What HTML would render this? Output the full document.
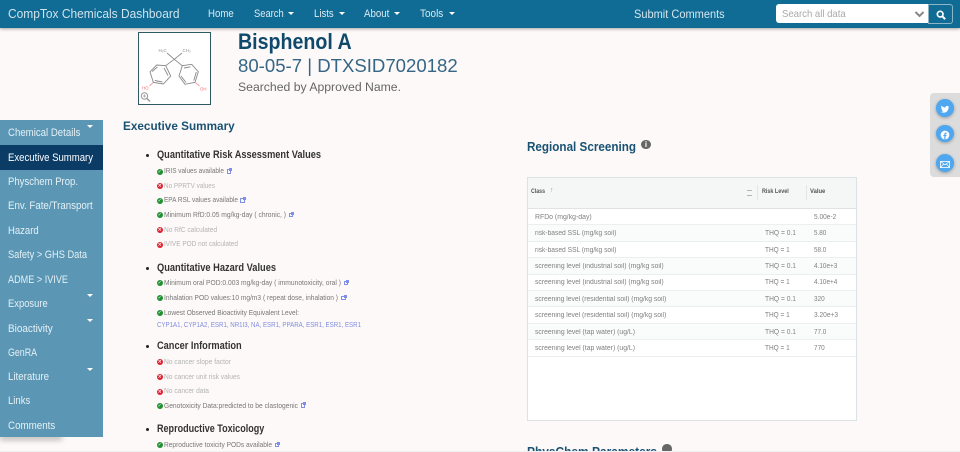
<!DOCTYPE html>
<html lang="en"><head><meta charset="utf-8"><title>Bisphenol A</title>
<style>
html,body{margin:0;padding:0;width:960px;height:452px;overflow:hidden;background:#fdf9f8;font-family:"Liberation Sans",sans-serif;}
#page{position:absolute;left:0;top:0;width:960px;height:452px;overflow:hidden;background:#fdf9f8;}
.a{position:absolute;white-space:nowrap;}
#nav{position:absolute;left:0;top:0;width:960px;height:28px;background:#106b95;box-shadow:0 1px 3px rgba(0,0,0,.35);color:#dcebf2;}
#nav .m{font-size:10.6px;line-height:16px;top:5.5px;}
.car{position:absolute;width:0;height:0;border-left:3px solid transparent;border-right:3px solid transparent;border-top:3px solid #fff;}
#sh{position:absolute;left:0;top:432px;width:62px;height:5px;box-shadow:0 3px 6px rgba(0,0,0,.28);}
#side{position:absolute;left:0;top:120px;width:103px;height:317px;background:#5b97b5;}
#side .i{position:absolute;left:7.7px;margin-top:.7px;font-size:11.2px;line-height:14px;color:#e4f0f5;white-space:nowrap;}
.h{font-size:10.8px;font-weight:bold;color:#333;line-height:13px;}
.t{font-size:7.4px;color:#777;line-height:10px;}
.g{color:#b3b3b3;}
.dot{position:absolute;width:3px;height:3px;border-radius:50%;background:#222;}
.ic{position:absolute;left:156.700px;width:6.200px;height:6.200px;border-radius:50%;color:#fff;font:bold 5px/6.200px "DejaVu Sans",sans-serif;text-align:center;}
.y{background:#1f9130;}.n{background:#e0202e;}
.y::after{content:"✓";}.n::after{content:"×";}
.ln{position:absolute;width:4.600px;height:4.600px;border:.8px solid #8090e6;box-sizing:border-box;}
.ln::after{content:"";position:absolute;left:1.500px;top:-2px;width:3px;height:3px;background:#8090e6;}
.tr{position:absolute;left:528px;width:328px;height:16.500px;border-bottom:1px solid #eceff1;font-size:7px;color:#808080;line-height:17px;box-sizing:border-box;}
.tr span{position:absolute;white-space:nowrap;}
.tr .c{left:7px}.tr .r{left:237.300px}.tr .v{left:286.300px}
.th{position:absolute;font-size:6.400px;line-height:10px;font-weight:bold;color:#555;white-space:nowrap;top:187px;}
.sb{position:absolute;left:936px;width:18px;height:17.500px;border-radius:50%;background:#4fa7ef;box-shadow:0 1px 3px rgba(0,0,0,.3);}
.hb{font-size:12.800px;line-height:17px;font-weight:bold;color:#1a5273;}
</style></head><body><div id="page">
<div id="nav">
<div class="a" w="171.500" style="left:8px;top:5px;font-size:12.800px;line-height:18px;color:#cfe3ec">CompTox Chemicals Dashboard</div>
<div class="a m" w="25.700" style="left:208.300px">Home</div>
<div class="a m" w="29.700" style="left:253.700px">Search</div><div class="car" style="left:288px;top:11.500px"></div>
<div class="a m" w="19.700" style="left:313.700px">Lists</div><div class="car" style="left:339px;top:11.500px"></div>
<div class="a m" w="25.300" style="left:364px">About</div><div class="car" style="left:394px;top:11.500px"></div>
<div class="a m" w="23.300" style="left:420px">Tools</div><div class="car" style="left:448.500px;top:11.500px"></div>
<div class="a" w="90.700" style="left:633.700px;top:5px;font-size:11.800px;line-height:18px;color:#d5e7ef">Submit Comments</div>
<div class="a" style="left:775.700px;top:4.300px;width:152.600px;height:19px;background:#fff;border-radius:3px 0 0 3px"></div>
<div class="a" w="63.700" style="left:782.300px;top:6.500px;font-size:10.400px;line-height:16px;color:#a8a8a8">Search all data</div>
<svg class="a" style="left:914px;top:10px" width="11" height="8" viewBox="0 0 11 8"><path d="M1.500 2l4 4 4-4" fill="none" stroke="#888" stroke-width="2"/></svg>
<div class="a" style="left:928px;top:4px;width:25px;height:19.500px;background:#106b95;border:1px solid #8db5c8;border-radius:0 3px 3px 0;box-sizing:border-box"></div>
<svg class="a" style="left:936px;top:9.500px" width="10" height="10" viewBox="0 0 12 12"><circle cx="5" cy="5" r="3.400" fill="none" stroke="#fff" stroke-width="2"/><path d="M7.500 7.500L11 11" stroke="#fff" stroke-width="2.400"/></svg>
</div>

<div class="a" style="left:138px;top:32px;width:73px;height:73px;border:1px solid #2f5a62;box-sizing:border-box;background:#fff"></div>
<svg class="a" style="left:138px;top:32px" width="73" height="73" viewBox="0 0 73 73">
<g fill="none" stroke="#8a8a8a" stroke-width=".9">
<path d="M36.300 27.300L29 21M36.300 27.300L44 21M36.300 27.300L27.700 33.700M36.300 27.300L44.300 33.700"/>
<path d="M27.700 33.700L32.700 44 25.300 52 15.300 50.300 12 39.700 18.700 33zM44.300 33.700L41 44 47 52.300 57 50.300 60.300 39.700 53.700 32.300z"/>
<path d="M26 36L30 43.500M16.800 48.500L24.500 50M14 39.500L19.500 35M46 36L52.500 34.800M58.300 40L55.800 48.500M48 50.500L43 44"/>
</g>
<path d="M15.300 50.300L11.500 54M57 50.300L61.500 54" stroke="#f29a9a" stroke-width=".9"/>
<text x="4" y="57.500" font-size="4.400" fill="#f07070" font-family="Liberation Sans">HO</text>
<text x="62" y="58.500" font-size="4.400" fill="#f07070" font-family="Liberation Sans">OH</text>
<text x="20.500" y="20" font-size="4.400" fill="#888" font-family="Liberation Sans">H₃C</text>
<text x="44.500" y="20" font-size="4.400" fill="#888" font-family="Liberation Sans">CH₃</text>
<circle cx="6.500" cy="64" r="3.200" fill="none" stroke="#999" stroke-width="1"/><path d="M9 66.500L12 69.500" stroke="#999" stroke-width="1.400"/><path d="M5 64h3M6.500 62.500v3" stroke="#999" stroke-width=".7"/>
</svg>

<div class="a" w="113.700" style="left:238px;top:29px;font-size:22px;line-height:26px;font-weight:bold;color:#0f4a6d">Bisphenol A</div>
<div class="a" w="219.700" style="left:237.700px;top:54px;font-size:18.400px;line-height:24px;color:#356685">80-05-7 | DTXSID7020182</div>
<div class="a" w="163" style="left:237.700px;top:79.300px;font-size:12.200px;line-height:16px;color:#666">Searched by Approved Name.</div>

<div id="sh"></div>
<div id="side">
<div class="a" style="left:0;top:25px;width:103px;height:24.500px;background:#0b3c66"></div>
<div class="i" w="72.300" style="top:5px">Chemical Details</div>
<div class="i" w="85" style="top:30px;color:#fff">Executive Summary</div>
<div class="i" w="70" style="top:54px">Physchem Prop.</div>
<div class="i" w="84.700" style="top:78.500px">Env. Fate/Transport</div>
<div class="i" w="30.700" style="top:103px">Hazard</div>
<div class="i" w="79" style="top:127.500px">Safety &gt; GHS Data</div>
<div class="i" w="60" style="top:152px">ADME &gt; IVIVE</div>
<div class="i" w="39.700" style="top:176px">Exposure</div>
<div class="i" w="44.700" style="top:201px">Bioactivity</div>
<div class="i" w="29" style="top:225px">GenRA</div>
<div class="i" w="41" style="top:249.500px">Literature</div>
<div class="i" w="22.300" style="top:273.500px">Links</div>
<div class="i" w="47.300" style="top:298px">Comments</div>
<div class="car" style="left:86.500px;top:5px"></div>
<div class="car" style="left:86.500px;top:174px"></div>
<div class="car" style="left:86.500px;top:199px"></div>
<div class="car" style="left:86.500px;top:247.500px"></div>
</div>

<div class="a" w="111.700" style="left:123.300px;top:118px;font-size:12.300px;line-height:16px;font-weight:bold;color:#1a5273">Executive Summary</div>

<div class="dot" style="left:146px;top:154px"></div>
<div class="a h" w="164" style="left:156.700px;top:148.500px">Quantitative Risk Assessment Values</div>
<div class="ic y" style="top:168.600px"></div><div class="a t" w="60" style="left:164px;top:166px">IRIS values available</div><div class="ln" style="left:226.500px;top:169px"></div>
<div class="ic n" style="top:183px"></div><div class="a t g" w="51" style="left:164px;top:180.500px">No PPRTV values</div>
<div class="ic y" style="top:197.600px"></div><div class="a t" w="74" style="left:164px;top:195px">EPA RSL values available</div><div class="ln" style="left:240px;top:198px"></div>
<div class="ic y" style="top:212.200px"></div><div class="a t" w="122" style="left:164px;top:209.500px">Minimum RfD:0.05 mg/kg-day ( chronic, )</div><div class="ln" style="left:288.500px;top:212.500px"></div>
<div class="ic n" style="top:227px"></div><div class="a t g" w="53" style="left:164px;top:224.500px">No RfC calculated</div>
<div class="ic n" style="top:241.600px"></div><div class="a t g" w="74" style="left:164px;top:239px">IVIVE POD not calculated</div>

<div class="dot" style="left:146px;top:266.500px"></div>
<div class="a h" w="119" style="left:156.700px;top:261.700px">Quantitative Hazard Values</div>
<div class="ic y" style="top:280.200px"></div><div class="a t" w="177" style="left:164px;top:277.500px">Minimum oral POD:0.003 mg/kg-day ( immunotoxicity, oral )</div><div class="ln" style="left:343.500px;top:280.500px"></div>
<div class="ic y" style="top:295.200px"></div><div class="a t" w="174" style="left:164px;top:292.500px">Inhalation POD values:10 mg/m3 ( repeat dose, inhalation )</div><div class="ln" style="left:341px;top:295.500px"></div>
<div class="ic y" style="top:310px"></div><div class="a t" w="135" style="left:164px;top:307.500px">Lowest Observed Bioactivity Equivalent Level:</div>
<div class="a t" w="204" style="left:156.700px;top:319.500px;color:#7f8ce0">CYP1A1, CYP1A2, ESR1, NR1I3, NA, ESR1, PPARA, ESR1, ESR1, ESR1</div>

<div class="dot" style="left:146px;top:344.500px"></div>
<div class="a h" w="84.700" style="left:156.700px;top:339.700px">Cancer Information</div>
<div class="ic n" style="top:359px"></div><div class="a t g" w="67" style="left:164px;top:357px">No cancer slope factor</div>
<div class="ic n" style="top:374px"></div><div class="a t g" w="76" style="left:164px;top:371.500px">No cancer unit risk values</div>
<div class="ic n" style="top:388.600px"></div><div class="a t g" w="45" style="left:164px;top:386px">No cancer data</div>
<div class="ic y" style="top:403px"></div><div class="a t" w="134" style="left:164px;top:400.500px">Genotoxicity Data:predicted to be clastogenic</div><div class="ln" style="left:300.500px;top:403px"></div>

<div class="dot" style="left:146px;top:427.500px"></div>
<div class="a h" w="107.300" style="left:156.700px;top:422.700px">Reproductive Toxicology</div>
<div class="ic y" style="top:442px"></div><div class="a t" w="108" style="left:164px;top:439.500px">Reproductive toxicity PODs available</div><div class="ln" style="left:274.500px;top:442.500px"></div>

<div class="a hb" w="109" style="left:526.700px;top:137.500px">Regional Screening</div>
<div class="a" style="left:641.300px;top:139.500px;width:9.500px;height:9.500px;border-radius:50%;background:#666;color:#fff;font-size:8px;line-height:9.500px;text-align:center;font-weight:bold">i</div>

<div class="a" style="left:527px;top:177.300px;width:330px;height:243.500px;background:#fff;border:1px solid #dde2e4;box-sizing:border-box"></div>
<div class="a" style="left:528px;top:178px;width:328px;height:31px;background:#f5f7f7;border-bottom:1px solid #dfe3e5;box-sizing:border-box"></div>
<div class="th" w="14" style="left:531px">Class</div>
<div class="a" style="left:550px;top:186px;font-size:7px;line-height:10px;color:#999">↑</div>
<div class="a" style="left:746.500px;top:190px;width:5.500px;height:4px;border-top:1px solid #b5b5b5;border-bottom:1px solid #b5b5b5"></div>
<div class="a" style="left:757px;top:185px;width:1px;height:15px;background:#e3e6e8"></div>
<div class="a" style="left:806px;top:185px;width:1px;height:15px;background:#e3e6e8"></div>
<div class="th" w="26.700" style="left:761.700px">Risk Level</div>
<div class="th" w="15.300" style="left:810.300px">Value</div>

<div class="tr" style="top:208.500px"><span class="c" w="56.700">RFDo (mg/kg-day)</span><span class="v" w="22.300">5.00e-2</span></div>
<div class="tr" style="top:225px;background:#fafcfc"><span class="c" w="81.300">risk-based SSL (mg/kg soil)</span><span class="r" w="31">THQ = 0.1</span><span class="v" w="12.300">5.80</span></div>
<div class="tr" style="top:241.500px"><span class="c" w="81.300">risk-based SSL (mg/kg soil)</span><span class="r" w="24.700">THQ = 1</span><span class="v" w="12.300">58.0</span></div>
<div class="tr" style="top:258px;background:#fafcfc"><span class="c" w="128.700">screening level (industrial soil) (mg/kg soil)</span><span class="r" w="31">THQ = 0.1</span><span class="v" w="23.300">4.10e+3</span></div>
<div class="tr" style="top:274.400px"><span class="c" w="128.700">screening level (industrial soil) (mg/kg soil)</span><span class="r" w="24.700">THQ = 1</span><span class="v" w="23.300">4.10e+4</span></div>
<div class="tr" style="top:290.800px;background:#fafcfc"><span class="c" w="131.300">screening level (residential soil) (mg/kg soil)</span><span class="r" w="31">THQ = 0.1</span><span class="v" w="10.700">320</span></div>
<div class="tr" style="top:307.300px"><span class="c" w="131.300">screening level (residential soil) (mg/kg soil)</span><span class="r" w="24.700">THQ = 1</span><span class="v" w="24">3.20e+3</span></div>
<div class="tr" style="top:323.700px;background:#fafcfc"><span class="c" w="100">screening level (tap water) (ug/L)</span><span class="r" w="31">THQ = 0.1</span><span class="v" w="12.300">77.0</span></div>
<div class="tr" style="top:340.200px"><span class="c" w="100">screening level (tap water) (ug/L)</span><span class="r" w="24.700">THQ = 1</span><span class="v" w="10.700">770</span></div>

<div class="a hb" w="130" style="left:527.300px;top:442.500px">PhysChem Parameters</div>
<div class="a" style="left:662.300px;top:444.300px;width:9.500px;height:9.500px;border-radius:50%;background:#666"></div>
<div class="a" style="left:0;top:451px;width:960px;height:1px;background:#eef0f2"></div>

<div class="a" style="left:930px;top:92.700px;width:30px;height:84px;background:#dcdcdc;border-radius:4px 0 0 4px"></div>
<div class="sb" style="top:99.200px"></div>
<div class="sb" style="top:124.500px"></div>
<div class="sb" style="top:154px"></div>
<svg class="a" style="left:940px;top:104.300px" width="10" height="10" viewBox="0 0 12 12"><path d="M1 9.500c4 2.200 9 .5 9.300-5.500l1-1.200-1.300.3c-.8-1.300-3.300-1.300-3.700 1.200C4.500 4.200 3 3.400 1.700 2c-.6 1.200-.2 2.500.7 3.200l-1-.2c0 1 .7 1.800 1.700 2.200l-1 .1c.3.700 1 1.200 1.900 1.200-.8.700-1.800 1-3 1z" fill="#fff"/></svg>
<svg class="a" style="left:940px;top:130px" width="10" height="10" viewBox="0 0 12 12"><circle cx="6" cy="6" r="5.200" fill="#fff"/><path d="M5.200 11.200V7.300H4V5.800h1.200V4.800c0-1.200.8-1.800 1.800-1.800h1v1.400h-.7c-.5 0-.7.300-.7.700v.7h1.300l-.2 1.500H6.600v3.900z" fill="#4fa7ef"/></svg>
<svg class="a" style="left:940px;top:161px" width="10" height="7" viewBox="0 0 10 7"><rect x=".4" y=".4" width="9.200" height="6.200" fill="none" stroke="#fff" stroke-width=".8"/><path d="M.4 .4L5 3.800 9.600 .4M.4 6.600l3.300-3.700M9.600 6.600L6.300 2.900" fill="none" stroke="#fff" stroke-width=".7"/></svg>
</div>
<script>
document.querySelectorAll('[w]').forEach(function(e){
  var t=parseFloat(e.getAttribute('w')),c=e.getBoundingClientRect().width;
  if(c>0){e.style.transformOrigin='left center';e.style.transform='scaleX('+(t/c)+')';}
});
</script>
</body></html>
